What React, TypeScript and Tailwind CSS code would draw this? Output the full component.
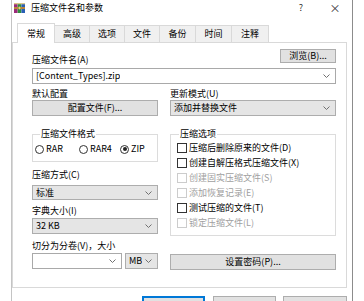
import React from 'react';

const font = { fontFamily: '"Noto Sans CJK SC", "Liberation Sans", sans-serif' };

function Chevron() {
  return (
    <svg width="7" height="4" viewBox="0 0 7 4" className="shrink-0">
      <path d="M0.5 0.5 L3.5 3.5 L6.5 0.5" fill="none" stroke="#707070" strokeWidth="1" />
    </svg>
  );
}

function Select({ text, white, className = '' }: { text: string; white?: boolean; className?: string }) {
  return (
    <div
      className={`flex items-center justify-between pl-[3px] pr-[5px] border ${
        white ? 'bg-white border-[#a9a9a9]' : 'bg-[#e5e5e5] border-[#adadad]'
      } ${className}`}
    >
      <span className="truncate">{text}</span>
      <Chevron />
    </div>
  );
}

function Button({ text = '', className = '' }: { text?: string; className?: string }) {
  return (
    <div className={`flex items-center justify-center bg-[#e1e1e1] border border-[#adadad] ${className}`}>
      {text}
    </div>
  );
}

function Radio({ label, checked }: { label: string; checked?: boolean }) {
  return (
    <div className="flex items-center gap-[2px]">
      <span className="w-[9px] h-[9px] rounded-full border border-[#333] flex items-center justify-center bg-white">
        {checked && <span className="w-[4px] h-[4px] rounded-full bg-[#222]" />}
      </span>
      <span>{label}</span>
    </div>
  );
}

function Check({ label, disabled }: { label: string; disabled?: boolean }) {
  return (
    <div className={`flex items-center gap-[2px] h-[12px] ${disabled ? 'text-[#a0a0a0]' : ''}`}>
      <span className={`w-[10px] h-[10px] border bg-white ${disabled ? 'border-[#cccccc]' : 'border-[#333]'}`} />
      <span>{label}</span>
    </div>
  );
}

function WinRarIcon() {
  return (
    <svg width="11" height="10" viewBox="0 0 11 10">
      <rect x="0" y="0" width="3.6" height="10" fill="#9b2a7a" />
      <rect x="3.7" y="0" width="3.6" height="10" fill="#2f8f3c" />
      <rect x="7.4" y="0" width="3.6" height="10" fill="#2a5fb5" />
      <rect x="0" y="0" width="11" height="1.3" fill="#d8c58a" />
      <rect x="0" y="4" width="11" height="2" fill="#b8873a" />
      <rect x="4.8" y="3.6" width="1.4" height="2.8" fill="#e8d48a" />
    </svg>
  );
}

const tabs = [
  { name: '常规', w: 'w-[38px]' },
  { name: '高级', w: 'w-[35px]' },
  { name: '选项', w: 'w-[35px]' },
  { name: '文件', w: 'w-[35px]' },
  { name: '备份', w: 'w-[36px]' },
  { name: '时间', w: 'w-[36px]' },
  { name: '注释', w: 'w-[37px]' },
];

export default function App() {
  return (
    <div className="w-[364px] h-[301px] overflow-hidden bg-white text-[9px] text-black" style={font}>
      <div className="ml-[11px] w-[342px] h-[301px] border-l border-r border-l-[#c4c4c4] border-r-[#8c8c8c]">
        {/* title bar */}
        <div className="h-[22px] flex items-start pt-[2px] pl-[2px]">
          <div className="pt-[1px]">
            <WinRarIcon />
          </div>
          <span className="ml-[6px] leading-[12px]">压缩文件名和参数</span>
          <div className="ml-auto flex text-[#333] leading-[12px]">
            <span className="w-[34px] text-center">?</span>
            <span className="w-[34px] text-center text-[11px]">×</span>
          </div>
        </div>

        {/* tabs */}
        <div className="h-[20px] flex items-end pl-[5px]">
          {tabs.map((t, i) =>
            i === 0 ? (
              <div
                key={t.name}
                className={`${t.w} h-[20px] mb-[-1px] relative z-10 bg-white border border-b-0 border-[#d9d9d9] flex items-center justify-center`}
              >
                {t.name}
              </div>
            ) : (
              <div
                key={t.name}
                className={`${t.w} h-[17px] bg-[#f0f0f0] border-t border-r border-[#d9d9d9] flex items-center justify-center`}
              >
                {t.name}
              </div>
            )
          )}
        </div>

        {/* panel */}
        <div className="w-[335px] h-[246px] border border-[#d9d9d9] pt-[6px] pl-[19px] pr-[10px]">
          <div className="flex justify-between h-[17px]">
            <span className="self-end leading-[12px]">压缩文件名(A)</span>
            <Button text="浏览(B)..." className="w-[56px] h-[14px]" />
          </div>
          <Select white text="[Content_Types].zip" className="mt-[2px] h-[16px]" />

          <div className="mt-[4px] grid grid-cols-[126px_166px] gap-x-[12px]">
            <span className="leading-[12px]">默认配置</span>
            <span className="leading-[12px]">更新模式(U)</span>
            <Button text="配置文件(F)..." className="h-[16px]" />
            <Select text="添加并替换文件" className="h-[16px]" />
          </div>

          <div className="mt-[12px] flex gap-[12px]">
            {/* left column */}
            <div className="w-[126px] flex flex-col">
              <fieldset className="border border-[#dcdcdc] pb-[6px] pl-[2px]">
                <legend className="ml-[5px] px-[1px] leading-[12px]">压缩文件格式</legend>
                <div className="mt-[3px] h-[12px] flex items-center">
                  <div className="w-[44px]">
                    <Radio label="RAR" />
                  </div>
                  <div className="w-[41px]">
                    <Radio label="RAR4" />
                  </div>
                  <Radio label="ZIP" checked />
                </div>
              </fieldset>
              <span className="mt-[7px] leading-[12px]">压缩方式(C)</span>
              <Select text="标准" className="mt-[4px] h-[15px]" />
              <span className="mt-[5px] leading-[12px]">字典大小(I)</span>
              <Select text="32 KB" className="mt-[1px] h-[16px]" />
              <span className="mt-[6px] leading-[12px]">切分为分卷(V)，大小</span>
              <div className="mt-[1px] flex gap-[3px]">
                <Select white text="" className="w-[90px] h-[16px]" />
                <Select text="MB" className="w-[33px] h-[16px]" />
              </div>
            </div>

            {/* right column */}
            <div className="w-[166px] flex flex-col">
              <fieldset className="border border-[#dcdcdc] pb-[6px] pl-[6px]">
                <legend className="ml-[2px] px-[1px] leading-[12px]">压缩选项</legend>
                <div className="mt-[2px] flex flex-col gap-[3px]">
                  <Check label="压缩后删除原来的文件(D)" />
                  <Check label="创建自解压格式压缩文件(X)" />
                  <Check label="创建固实压缩文件(S)" disabled />
                  <Check label="添加恢复记录(E)" disabled />
                  <Check label="测试压缩的文件(T)" />
                  <Check label="锁定压缩文件(L)" disabled />
                </div>
              </fieldset>
              <Button text="设置密码(P)..." className="mt-[18px] h-[16px]" />
            </div>
          </div>
        </div>

        {/* dialog buttons, cut off by the window edge */}
        <div className="mt-[8px] flex pl-[130px]">
          <div className="w-[63px] h-[23px] bg-[#e1e1e1] border border-[#0078d7] shadow-[inset_0_0_0_1px_#0078d7]" />
          <Button className="ml-[8px] w-[63px] h-[23px]" />
          <Button className="ml-[7px] w-[64px] h-[23px]" />
        </div>
      </div>
    </div>
  );
}
